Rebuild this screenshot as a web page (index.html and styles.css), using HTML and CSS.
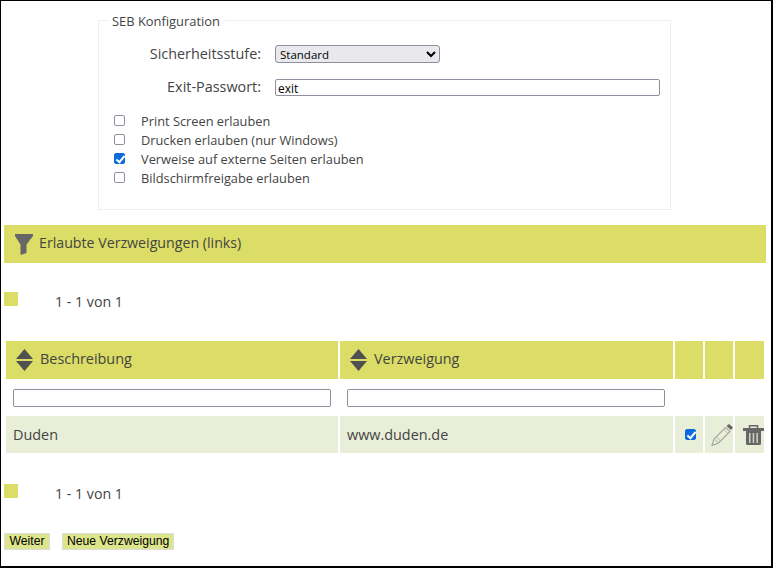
FILE: index.html
```html
<!DOCTYPE html>
<html lang="de">
<head>
<meta charset="utf-8">
<title>SEB Konfiguration</title>
<link rel="stylesheet" href="styles.css">
</head>
<body>
<div class="page">
  <fieldset class="config">
    <legend>SEB Konfiguration</legend>
    <div class="field first-field">
      <label class="field-label">Sicherheitsstufe:</label>
      <select class="level"><option>Standard</option></select>
    </div>
    <div class="field second-field">
      <label class="field-label">Exit-Passwort:</label>
      <input class="password" type="text" value="exit">
    </div>
    <div class="checks">
      <label class="check"><input class="box" type="checkbox"><span>Print Screen erlauben</span></label>
      <label class="check"><input class="box" type="checkbox"><span>Drucken erlauben (nur Windows)</span></label>
      <label class="check"><input class="box" type="checkbox" checked><span>Verweise auf externe Seiten erlauben</span></label>
      <label class="check"><input class="box" type="checkbox"><span>Bildschirmfreigabe erlauben</span></label>
    </div>
  </fieldset>

  <div class="section-bar">
    <svg class="funnel" width="18" height="21" viewBox="0 0 18 21"><path d="M0 0h18v2L11.500 10.500V19L5.500 21V10.500L0 2z" fill="#666"/></svg>
    <span class="bar-title">Erlaubte Verzweigungen (links)</span>
  </div>

  <div class="pager pager-top"><span class="pager-box"></span><span class="pager-text">1 - 1 von 1</span></div>

  <table class="grid">
    <colgroup><col class="c-a"><col class="c-b"><col class="c-c"><col class="c-d"><col class="c-e"></colgroup>
    <thead>
      <tr class="head">
        <th><span class="th-in"><svg width="17" height="22" viewBox="0 0 17 22"><path d="M8.500 0L17 10H0zM0 12h17L8.500 22z" fill="#505050"/></svg><span class="th-label">Beschreibung</span></span></th>
        <th><span class="th-in"><svg width="17" height="22" viewBox="0 0 17 22"><path d="M8.500 0L17 10H0zM0 12h17L8.500 22z" fill="#505050"/></svg><span class="th-label">Verzweigung</span></span></th>
        <th></th><th></th><th></th>
      </tr>
      <tr class="filters">
        <td><input class="filter" type="text"></td>
        <td><input class="filter" type="text"></td>
        <td></td><td></td><td></td>
      </tr>
    </thead>
    <tbody>
      <tr class="row">
        <td>Duden</td>
        <td>www.duden.de</td>
        <td class="center"><input class="box row-check" type="checkbox" checked></td>
        <td class="center"><svg class="block-icon" width="22" height="22" viewBox="0 0 22 22"><path d="M1 21.500l2-6.500L14.500 3.500l4.500 4L7.500 19z" fill="none" stroke="#a3a59c" stroke-width="1.100"/><path d="M3 15l4.500 4M5.500 13l4 4M13 5.500l4 4" fill="none" stroke="#b4b6aa"/><path d="M18 0l4 3.500-2 2.500-4.500-4z" fill="#666"/></svg></td>
        <td class="center"><svg class="block-icon" width="21" height="20" viewBox="0 0 21 20"><path d="M6.500 3V.8h8V3" fill="none" stroke="#666" stroke-width="1.500"/><path d="M0 3h21v3H0z" fill="#666"/><path d="M3 6h15v12.500a1.500 1.500 0 0 1-1.500 1.500h-12A1.500 1.500 0 0 1 3 18.500z" fill="#666"/><path d="M6 8h1.500v10H6zM9.700 8h1.500v10H9.700zM13.400 8h1.500v10h-1.500z" fill="#cfd3c2"/></svg></td>
      </tr>
    </tbody>
  </table>

  <div class="pager pager-bottom"><span class="pager-box"></span><span class="pager-text">1 - 1 von 1</span></div>

  <div class="actions">
    <button class="btn" type="button">Weiter</button>
    <button class="btn" type="button">Neue Verzweigung</button>
  </div>
</div>
</body>
</html>
```

FILE: styles.css
```css
* { box-sizing: border-box; }
html, body { margin: 0; padding: 0; background: #fff; }
body { font-family: "Open Sans", sans-serif; color: #444; font-size: 13px; }
.page {
  width: 773px;
  height: 568px;
  border-style: solid;
  border-color: #000;
  border-width: 1px 2px 2px 1px;
  padding-left: 3px;
  overflow: hidden;
}
.config {
  width: 573px;
  height: 200px;
  margin: 9px 0 0 94px;
  padding: 0;
  border: 1px solid #eee;
}
.config legend { margin-left: 9px; padding: 2px 5px 0 4px; font-size: 12.900px; line-height: 18px; color: #444; }
.field { display: flex; align-items: center; }
.field-label { width: 162px; text-align: right; font-size: 14.400px; line-height: 20px; }
.first-field { margin-top: 14px; height: 20px; }
.second-field { margin-top: 13px; height: 20px; }
.level {
  width: 165px; height: 18px; margin-left: 14px; padding: 0;
  font-family: "Open Sans", sans-serif; font-size: 11.500px; color: #000;
  border: 1px solid #8f8f9d; border-radius: 3px; background-color: #e9e9ed;
}
.password {
  width: 385px; height: 17px; margin-left: 14px; padding: 2px 2px 0;
  font-family: "Open Sans", sans-serif; font-size: 12px; color: #000;
  border: 1px solid #8f8f9d; border-radius: 2px; background: #fff;
}
.checks { margin-top: 14px; margin-left: 15px; display: flex; flex-direction: column; }
.check { display: flex; align-items: center; height: 19px; font-size: 12.800px; }
.box {
  appearance: none; position: relative; display: block;
  width: 11px; height: 11px; margin: 0;
  border: 1px solid #8f8f9d; border-radius: 2px; background: #fff;
}
.box:checked { background: #0b6bdc; border-color: #0b6bdc; }
.box:checked::after {
  content: ""; position: absolute; left: 3px; top: 0; width: 3px; height: 7px;
  border: solid #fff; border-width: 0 2px 2px 0; transform: rotate(40deg);
}
.check .box { margin-right: 16px; }
.section-bar {
  display: flex; align-items: center; gap: 6px;
  width: 762px; height: 38px; margin-top: 15px; padding-left: 11px;
  background: #dbdd66; font-size: 14.200px;
}
.bar-title { margin-bottom: 4px; }
.pager { display: flex; height: 20px; }
.pager-box { width: 14px; height: 14px; background: #dbdd66; }
.pager-text { margin-left: 37px; font-size: 14.200px; line-height: 20px; color: #444; }
.pager-top { margin-top: 29px; }
.pager-bottom { margin-top: 29px; }
.grid { border-collapse: separate; border-spacing: 2px; table-layout: fixed; width: 762px; margin-top: 27px; }
.c-a { width: 332px; }
.c-b { width: 333px; }
.c-c { width: 28px; } .c-d { width: 28px; } .c-e { width: 29px; }
.grid td, .grid th { padding: 0; }
.head th { height: 38px; background: #dbdd66; text-align: left; font-size: 14.400px; font-weight: 400; }
.th-in { display: flex; align-items: center; gap: 7px; padding-left: 10px; }
.th-label { margin-bottom: 4px; }
.filters td { height: 33px; padding: 8px 0 0 7px; vertical-align: top; }
.filter { display: block; width: 318px; height: 18px; border: 1px solid #8f8f9d; border-radius: 2px; background: #fff; }
.row td { height: 37px; background: #e9eed8; font-size: 14.400px; padding-left: 7px; }
.row td.center { padding: 0; }
.row-check { margin: 0 0 0 10px; }
.block-icon { display: block; margin-left: auto; }
.actions { display: flex; gap: 12px; margin-top: 29px; }
.btn {
  height: 17px; min-width: 46px; padding: 0 4px; margin: 0;
  font-family: "Liberation Sans", Arial, sans-serif; font-size: 12.200px; line-height: 13px; color: #000;
  background: #dde58c; border: 1px solid #ddd; border-radius: 0;
}
```
